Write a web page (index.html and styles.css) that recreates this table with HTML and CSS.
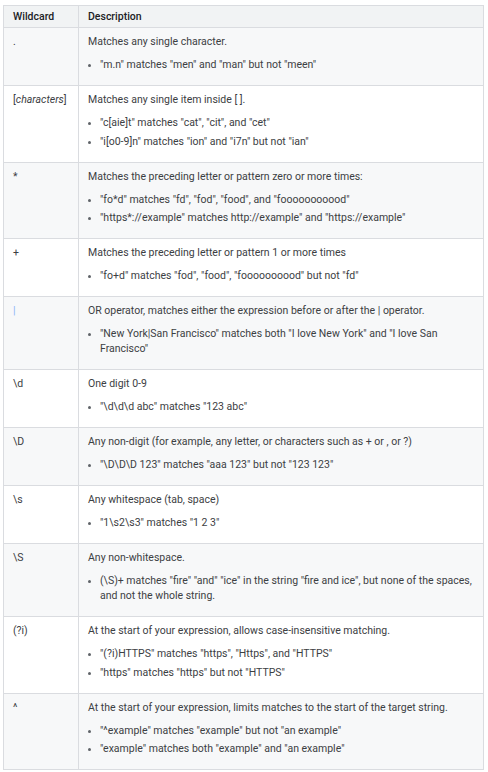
FILE: index.html
```html
<!DOCTYPE html>
<html>
<head>
<meta charset="utf-8">
<link rel="stylesheet" href="styles.css">
</head>
<body>
<table class="wc-table">
  <thead>
    <tr><th class="col-wc">Wildcard</th><th>Description</th></tr>
  </thead>
  <tbody>
    <tr class="shade">
      <td>.</td>
      <td><p>Matches any single character.</p>
        <ul><li>"m.n" matches "men" and "man" but not "meen"</li></ul></td>
    </tr>
    <tr>
      <td>[<em>characters</em>]</td>
      <td><p>Matches any single item inside [ ].</p>
        <ul><li>"c[aie]t" matches "cat", "cit", and "cet"</li><li>"i[o0-9]n" matches "ion" and "i7n" but not "ian"</li></ul></td>
    </tr>
    <tr class="shade">
      <td>*</td>
      <td><p>Matches the preceding letter or pattern zero or more times:</p>
        <ul><li>"fo*d" matches "fd", "fod", "food", and "fooooooooood"</li><li>"https*://example" matches http://example" and "https://example"</li></ul></td>
    </tr>
    <tr>
      <td>+</td>
      <td><p>Matches the preceding letter or pattern 1 or more times</p>
        <ul><li>"fo+d" matches "fod", "food", "foooooooood" but not "fd"</li></ul></td>
    </tr>
    <tr class="shade">
      <td class="pipe">|</td>
      <td><p>OR operator, matches either the expression before or after the | operator.</p>
        <ul><li>"New York|San Francisco" matches both "I love New York" and "I love San Francisco"</li></ul></td>
    </tr>
    <tr>
      <td>\d</td>
      <td><p>One digit 0-9</p>
        <ul><li>"\d\d\d abc" matches "123 abc"</li></ul></td>
    </tr>
    <tr class="shade">
      <td>\D</td>
      <td><p>Any non-digit (for example, any letter, or characters such as + or , or ?)</p>
        <ul><li>"\D\D\D 123" matches "aaa 123" but not "123 123"</li></ul></td>
    </tr>
    <tr>
      <td>\s</td>
      <td><p>Any whitespace (tab, space)</p>
        <ul><li>"1\s2\s3" matches "1 2 3"</li></ul></td>
    </tr>
    <tr class="shade">
      <td>\S</td>
      <td><p>Any non-whitespace.</p>
        <ul><li>(\S)+ matches "fire" "and" "ice" in the string "fire and ice", but none of the spaces, and not the whole string.</li></ul></td>
    </tr>
    <tr>
      <td>(?i)</td>
      <td><p>At the start of your expression, allows case-insensitive matching.</p>
        <ul><li>"(?i)HTTPS" matches "https", "Https", and "HTTPS"</li><li>"https" matches "https" but not "HTTPS"</li></ul></td>
    </tr>
    <tr class="shade">
      <td>^</td>
      <td><p>At the start of your expression, limits matches to the start of the target string.</p>
        <ul><li>"^example" matches "example" but not "an example"</li><li>"example" matches both "example" and "an example"</li></ul></td>
    </tr>
  </tbody>
</table>
</body>
</html>
```

FILE: styles.css
```css
html, body {
  margin: 0;
  padding: 0;
  background: #ffffff;
}
body {
  font-family: Roboto, "Liberation Sans", sans-serif;
  font-size: 10.5px;
  line-height: 15px;
  color: #3c4043;
}
.wc-table {
  margin: 5px 0 0 3px;
  width: 481px;
  border-collapse: collapse;
  border: 1px solid #dadce0;
}
.wc-table th {
  background: #f1f3f4;
  color: #202124;
  font-weight: 500;
  text-align: left;
  padding: 3px 9px 3px 9px;
  border: 1px solid #dadce0;
  height: 15px;
}
.wc-table .col-wc {
  width: 56px;
}
.wc-table td {
  vertical-align: top;
  padding: 6px 9px 6px 9px;
  border: 1px solid #dadce0;
}
.wc-table tr.shade td {
  background: #f7f8f9;
}
.wc-table em {
  font-style: italic;
}
.wc-table p {
  margin: 0 0 8px 0;
}
.wc-table ul {
  margin: 0 0 7px 0;
  padding-left: 12px;
}
.wc-table li {
  margin-top: 3.5px;
}
.wc-table li:first-child {
  margin-top: 0;
}
.wc-table li::marker {
  color: #5f6368;
  font-size: 9px;
}
.pipe {
  color: #8ab4f8;
}
```
